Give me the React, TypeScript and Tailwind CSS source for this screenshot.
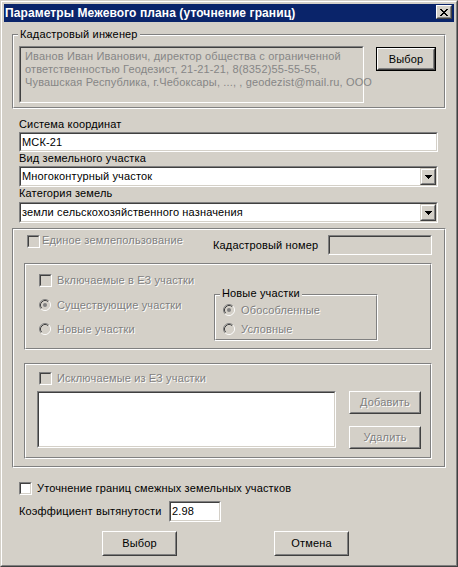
import React from "react";

const DIS = "text-[#808080] [text-shadow:1px_1px_0_#ffffff]";

function Sunken({ className = "", inner = "bg-white", children }: { className?: string; inner?: string; children?: React.ReactNode }) {
  return (
    <div className={`border border-t-[#808080] border-l-[#808080] border-r-white border-b-white ${className}`}>
      <div className={`h-full w-full border border-t-[#404040] border-l-[#404040] border-r-[#D4D0C8] border-b-[#D4D0C8] ${inner}`}>
        {children}
      </div>
    </div>
  );
}

function Btn({ className = "", disabled = false, def = false, children }: { className?: string; disabled?: boolean; def?: boolean; children: React.ReactNode }) {
  const core = (
    <div className="h-full w-full border border-t-white border-l-white border-r-[#404040] border-b-[#404040]">
      <div className={`h-full w-full border border-t-[#D4D0C8] border-l-[#D4D0C8] border-r-[#808080] border-b-[#808080] flex items-center justify-center ${disabled ? DIS : "text-black"}`}>
        {children}
      </div>
    </div>
  );
  return def ? (
    <div className={`border border-black shrink-0 ${className}`}>{core}</div>
  ) : (
    <div className={`shrink-0 ${className}`}>{core}</div>
  );
}

function Group({ className = "", label, labelClass = "", children }: { className?: string; label?: string; labelClass?: string; children?: React.ReactNode }) {
  return (
    <div className={`relative shrink-0 border border-t-[#808080] border-l-[#808080] border-r-white border-b-white ${className}`}>
      <div className="h-full w-full border border-t-white border-l-white border-r-[#808080] border-b-[#808080]">{children}</div>
      {label && <span className={`absolute bg-[#D4D0C8] px-[2px] leading-[13px] whitespace-nowrap ${labelClass}`}>{label}</span>}
    </div>
  );
}

function Check({ white = false }: { white?: boolean }) {
  return <Sunken className="w-[13px] h-[13px] shrink-0" inner={white ? "bg-white" : "bg-[#D4D0C8]"} />;
}

function Radio({ checked = false }: { checked?: boolean }) {
  return (
    <svg width="12" height="12" viewBox="0 0 12 12" className="shrink-0">
      <circle cx="6" cy="6" r="5" fill="#D4D0C8" />
      <path d="M2.11 9.89 A5.5 5.5 0 0 1 9.89 2.11" stroke="#808080" fill="none" />
      <path d="M9.89 2.11 A5.5 5.5 0 0 1 2.11 9.89" stroke="#ffffff" fill="none" />
      <path d="M2.82 9.18 A4.5 4.5 0 0 1 9.18 2.82" stroke="#404040" fill="none" />
      <path d="M9.18 2.82 A4.5 4.5 0 0 1 2.82 9.18" stroke="#D4D0C8" fill="none" />
      {checked && <circle cx="6" cy="6" r="2" fill="#808080" />}
    </svg>
  );
}

function Arrow() {
  return (
    <svg width="7" height="4" viewBox="0 0 7 4" shapeRendering="crispEdges">
      <rect x="0" y="0" width="7" height="1" fill="#000" />
      <rect x="1" y="1" width="5" height="1" fill="#000" />
      <rect x="2" y="2" width="3" height="1" fill="#000" />
      <rect x="3" y="3" width="1" height="1" fill="#000" />
    </svg>
  );
}

function CloseX() {
  const px: [number, number][] = [
    [0, 0], [1, 0], [6, 0], [7, 0],
    [1, 1], [2, 1], [5, 1], [6, 1],
    [2, 2], [3, 2], [4, 2], [5, 2],
    [3, 3], [4, 3],
    [2, 4], [3, 4], [4, 4], [5, 4],
    [1, 5], [2, 5], [5, 5], [6, 5],
    [0, 6], [1, 6], [6, 6], [7, 6],
  ];
  return (
    <svg width="8" height="7" viewBox="0 0 8 7" shapeRendering="crispEdges">
      {px.map(([x, y], i) => (
        <rect key={i} x={x} y={y} width="1" height="1" fill="#000" />
      ))}
    </svg>
  );
}

function Select({ className = "", value }: { className?: string; value: string }) {
  return (
    <Sunken className={`h-[21px] ${className}`} inner="bg-white">
      <div className="flex h-full items-stretch">
        <div className="flex-1 pl-[1px] leading-[17px] whitespace-nowrap overflow-hidden">{value}</div>
        <div className="w-[16px] shrink-0 border border-t-[#D4D0C8] border-l-[#D4D0C8] border-r-[#404040] border-b-[#404040]">
          <div className="h-full w-full border border-t-white border-l-white border-r-[#808080] border-b-[#808080] bg-[#D4D0C8] flex items-center justify-center">
            <Arrow />
          </div>
        </div>
      </div>
    </Sunken>
  );
}

export default function App() {
  return (
    <div className="w-[458px] h-[567px] bg-[#D4D0C8] border border-t-[#D4D0C8] border-l-[#D4D0C8] border-r-[#404040] border-b-[#404040] font-['Liberation_Sans',Arial,sans-serif] text-[11px] leading-[13px] tracking-[0.15px] text-black">
      <div className="h-full border border-t-white border-l-white border-r-[#808080] border-b-[#808080] p-[2px] flex flex-col">
        {/* Title bar */}
        <div className="h-[18px] shrink-0 bg-[#0A246A] flex items-start pl-[1px] pr-[2px]">
          <span className="flex-1 text-white font-bold text-[12px] leading-[18px] tracking-[0.1px] whitespace-nowrap">
            Параметры Межевого плана (уточнение границ)
          </span>
          <div className="mt-[1px] w-[16px] h-[14px] shrink-0 border border-t-white border-l-white border-r-[#404040] border-b-[#404040]">
            <div className="h-full w-full border border-t-[#D4D0C8] border-l-[#D4D0C8] border-r-[#808080] border-b-[#808080] bg-[#D4D0C8] flex items-center justify-center">
              <CloseX />
            </div>
          </div>
        </div>

        {/* Кадастровый инженер */}
        <Group className="mt-[12px] mx-[8px] h-[75px]" label="Кадастровый инженер" labelClass="left-[5px] top-[-7px]">
          <div className="flex items-start pl-[5px] pt-[10px]">
            <Sunken className="w-[345px] h-[57px] shrink-0" inner="bg-[#D4D0C8]">
              <div className="pl-[4px] pt-[2px] text-[#868686] whitespace-nowrap">
                <div>Иванов Иван Иванович, директор общества с ограниченной</div>
                <div>ответственностью Геодезист, 21-21-21, 8(8352)55-55-55,</div>
                <div>Чувашская Республика, г.Чебоксары, ..., , geodezist@mail.ru, ООО</div>
              </div>
            </Sunken>
            <Btn def className="ml-[12px] mt-[1px] w-[60px] h-[24px]">Выбор</Btn>
          </div>
        </Group>

        {/* Fields */}
        <div className="ml-[15px] mr-[16px] flex flex-col">
          <div className="mt-[9px] h-[13px]">Система координат</div>
          <Sunken className="mt-[1px] h-[20px]" inner="bg-white">
            <div className="pl-[1px] leading-[16px]">МСК-21</div>
          </Sunken>
          <div className="h-[13px]">Вид земельного участка</div>
          <Select className="mt-[1px]" value="Многоконтурный участок" />
          <div className="h-[13px]">Категория земель</div>
          <Select className="mt-[2px]" value="земли сельскохозяйственного назначения" />
        </div>

        {/* Big group */}
        <Group className="mt-[5px] mx-[8px] h-[240px]">
          <div className="flex items-start pt-[5px] pl-[13px]">
            <div className="w-[186px] flex items-start shrink-0">
              <Check />
              <span className={`ml-[2px] mt-[-1px] ${DIS}`}>Единое землепользование</span>
            </div>
            <span className="w-[115px] mt-[4px] shrink-0">Кадастровый номер</span>
            <Sunken className="w-[104px] h-[20px]" inner="bg-[#D4D0C8]" />
          </div>

          <Group className="mt-[8px] ml-[10px] w-[408px] h-[87px]">
            <div className="flex items-center pt-[9px] pl-[13px]">
              <Check />
              <span className={`ml-[5px] ${DIS}`}>Включаемые в ЕЗ участки</span>
            </div>
            <div className="flex items-start mt-[7px]">
              <div className="w-[188px] pl-[13px] pt-[5px] flex flex-col shrink-0">
                <div className="flex items-center h-[12px]">
                  <Radio checked />
                  <span className={`ml-[6px] ${DIS}`}>Существующие участки</span>
                </div>
                <div className="flex items-center h-[12px] mt-[12px]">
                  <Radio />
                  <span className={`ml-[6px] ${DIS}`}>Новые участки</span>
                </div>
              </div>
              <Group className="w-[164px] h-[47px]" label="Новые участки" labelClass="left-[5px] top-[-8px]">
                <div className="pl-[7px] pt-[8px] flex flex-col">
                  <div className="flex items-center h-[12px]">
                    <Radio checked />
                    <span className={`ml-[6px] ${DIS}`}>Обособленные</span>
                  </div>
                  <div className="flex items-center h-[12px] mt-[7px]">
                    <Radio />
                    <span className={`ml-[6px] ${DIS}`}>Условные</span>
                  </div>
                </div>
              </Group>
            </div>
          </Group>

          <Group className="mt-[13px] ml-[10px] w-[408px] h-[96px]">
            <div className="flex items-center pt-[7px] pl-[13px]">
              <Check />
              <span className={`ml-[5px] ${DIS}`}>Исключаемые из ЕЗ участки</span>
            </div>
            <div className="flex items-start mt-[6px] pl-[11px]">
              <Sunken className="w-[299px] h-[57px] shrink-0" inner="bg-white" />
              <div className="ml-[13px] flex flex-col">
                <Btn disabled className="w-[72px] h-[23px]">Добавить</Btn>
                <Btn disabled className="mt-[12px] w-[72px] h-[23px]">Удалить</Btn>
              </div>
            </div>
          </Group>
        </Group>

        {/* Bottom */}
        <div className="mt-[14px] ml-[15px] flex items-center">
          <Check white />
          <span className="ml-[5px]">Уточнение границ смежных земельных участков</span>
        </div>
        <div className="mt-[6px] ml-[15px] flex items-center h-[21px]">
          <span className="w-[150px] shrink-0">Коэффициент вытянутости</span>
          <Sunken className="w-[52px] h-[21px]" inner="bg-white">
            <div className="pl-[1px] leading-[17px]">2.98</div>
          </Sunken>
        </div>
        <div className="mt-[9px] ml-[98px] flex gap-[97px]">
          <Btn className="w-[75px] h-[25px]">Выбор</Btn>
          <Btn className="w-[75px] h-[25px]">Отмена</Btn>
        </div>
      </div>
    </div>
  );
}
